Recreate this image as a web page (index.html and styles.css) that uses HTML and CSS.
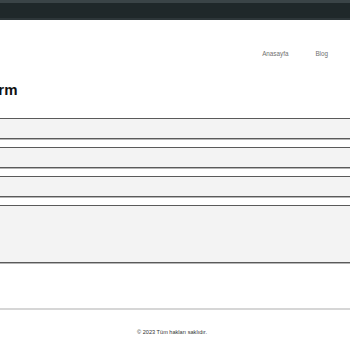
FILE: index.html
```html
<!DOCTYPE html>
<html lang="tr">

<head>
    <meta charset="UTF-8">
    <meta name="viewport" content="width=device-width, initial-scale=1.0">
    <title>Form</title>
    <link rel="stylesheet" href="styles.css">
</head>
<body>
    <div class="topbar"></div>
    <div class="wrapper">
        <header>
            <nav class="menu">
                <a href="#">Anasayfa</a>
                <a href="#">Blog</a>
            </nav>
        </header>
        <main>
            <h1>Form</h1>
            <form class="contact">
                <input type="text" name="ad">
                <input type="email" name="email">
                <input type="text" name="konu">
                <textarea name="mesaj"></textarea>
            </form>
        </main>
    </div>
    <footer>
        <p>&copy; 2023 Tüm hakları saklıdır.</p>
    </footer>
</body>
</html>
```

FILE: styles.css
```css
html,
body {
    overflow-x: hidden;
}

body {
    font-family: 'Liberation Sans', Arial, sans-serif;
    margin: 0;
    padding: 0;
    background-color: white;
    color: #111;
}

.topbar {
    height: 15px;
    background-color: #1f282a;
    border-top: 3px solid #3a4447;
    border-bottom: 2px solid #2d3639;
}

.wrapper {
    width: 390px;
    margin-left: calc(50% - 195px);
}

header {
    padding-top: 29px;
}

.menu {
    display: flex;
    justify-content: flex-end;
    gap: 27px;
    padding-right: 42px;
}

.menu a {
    font-size: 6.3px;
    line-height: 10px;
    color: #707070;
    text-decoration: none;
}

h1 {
    font-size: 15px;
    line-height: 18px;
    margin: 22px 0 19px;
    font-weight: bold;
}

.contact {
    display: flex;
    flex-direction: column;
    gap: 8px;
}

.contact input,
.contact textarea {
    box-sizing: border-box;
    width: 100%;
    height: 21px;
    margin: 0;
    padding: 4px;
    background-color: #f3f3f3;
    border: 1px solid #5a5a5a;
    box-shadow: 0 1px 0 #b5b5b5;
    border-radius: 0;
}

.contact textarea {
    height: 58px;
    resize: none;
}

footer {
    margin-top: 45px;
    border-top: 2px solid #d6d6d6;
    text-align: center;
}

footer p {
    margin: 0;
    padding: 18px 6px 0 0;
    font-size: 5.6px;
    line-height: 8px;
    color: #333;
}
```
